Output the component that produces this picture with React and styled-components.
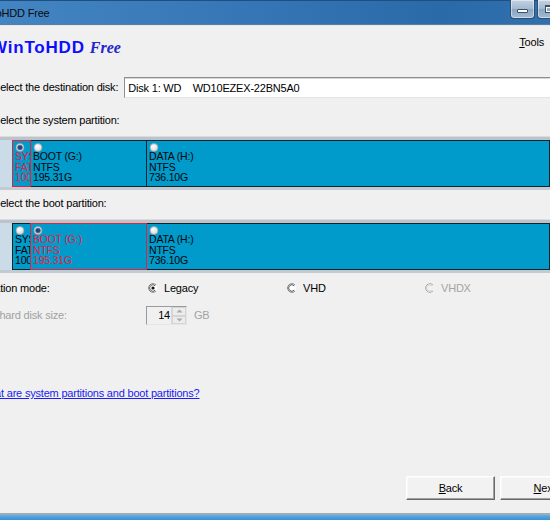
import React from "react";
import styled, { createGlobalStyle } from "styled-components";

const GlobalStyle = createGlobalStyle`
  html, body {
    margin: 0;
    padding: 0;
    background: #f0f0f0;
    overflow: hidden;
  }
  body {
    font-family: "Liberation Sans", Arial, sans-serif;
  }
`;

const Window = styled.div`
  width: 550px;
  height: 520px;
  overflow: hidden;
  display: flex;
  flex-direction: column;
  background: #f0f0f0;
  font-size: 11px;
  letter-spacing: -0.2px;
  color: #000;
`;

const TitleBar = styled.div`
  flex: none;
  height: 25px;
  box-sizing: border-box;
  display: flex;
  align-items: flex-start;
  background: linear-gradient(90deg, #4384c2 0%, #3676b6 45%, #2b6aa9 80%, #3070ae 100%);
  border-top: 1px solid #1f4f80;
  border-bottom: 1px solid #5f7d99;
  box-shadow: 0 1px 0 #dfe7ef;
`;

const TitleText = styled.span`
  flex: 1 1 0;
  min-width: 0;
  margin-left: -28px;
  margin-top: 6px;
  white-space: nowrap;
  color: #0a0a0a;
`;

const Captions = styled.div`
  flex: none;
  display: flex;
  gap: 2px;
  margin-right: -57px;
  margin-top: -1px;
`;

const CaptionButton = styled.div`
  flex: none;
  width: ${(p) => p.$width}px;
  height: 19px;
  box-sizing: border-box;
  border: 1px solid #2f4f70;
  border-top: none;
  border-radius: 0 0 4px 4px;
  background: ${(p) =>
    p.$danger
      ? "linear-gradient(#e7a493 0%, #d3725a 48%, #c3462a 52%, #d5694d 100%)"
      : "linear-gradient(#c3d3e3 0%, #a4bad1 48%, #8ca6c1 52%, #a3bbd3 100%)"};
  box-shadow: inset 0 0 0 1px rgba(255, 255, 255, 0.45);
  display: flex;
  align-items: center;
  justify-content: center;
`;

const MinGlyph = styled.div`
  width: 9px;
  height: 2px;
  margin-top: 4px;
  background: #fff;
  border: 1px solid #3b4f66;
  border-radius: 1px;
`;

const MaxGlyph = styled.div`
  width: 8px;
  height: 5px;
  border: 1px solid #3b4f66;
  border-top-width: 2px;
  box-shadow: inset 0 0 0 1px #fff;
`;

const Client = styled.div`
  flex: 1;
  display: flex;
  flex-direction: column;
  min-height: 0;
`;

const Header = styled.div`
  display: flex;
  justify-content: space-between;
  align-items: flex-start;
  padding-top: 13px;
  padding-right: 6px;
  height: 20px;
`;

const Logo = styled.div`
  white-space: nowrap;
  line-height: 20px;
  letter-spacing: 0;
`;

const Brand = styled.span`
  margin-left: -9px;
  font-family: "Liberation Sans", Arial, sans-serif;
  font-weight: bold;
  font-size: 17px;
  letter-spacing: 0.8px;
  color: #0d0dff;
`;

const Edition = styled.span`
  margin-left: 5px;
  font-family: "Liberation Serif", "Times New Roman", serif;
  font-weight: bold;
  font-style: italic;
  font-size: 16px;
  color: #2323cf;
`;

const MenuItem = styled.span`
  margin-top: -2px;
  line-height: 13px;
`;

const Key = styled.span`
  text-decoration: underline;
`;

const Label = styled.span`
  flex: none;
  margin-left: ${(p) => p.$shift}px;
  line-height: 13px;
  white-space: nowrap;
  color: ${(p) => (p.$muted ? "#a0a0a0" : "#000")};
`;

const DiskRow = styled.div`
  display: flex;
  align-items: center;
  gap: 6px;
  margin-top: 19px;
`;

const Combo = styled.div`
  flex: none;
  width: 500px;
  height: 21px;
  box-sizing: border-box;
  padding-left: 3px;
  background: #fff;
  border-top: 1px solid #8e8f8f;
  border-left: 1px solid #8e8f8f;
  border-bottom: 1px solid #e3e3e3;
  box-shadow: inset 0 1px 0 #d6d6d6;
  display: flex;
  align-items: center;
  white-space: pre;
`;

const SectionTitle = styled.div`
  display: flex;
  margin-top: ${(p) => p.$top}px;
`;

const DiskBar = styled.div`
  margin-top: 10px;
  height: 53px;
  box-sizing: border-box;
  display: flex;
  background: #cfdce7;
  border-top: 3px solid #bcc3ca;
  border-bottom: 3px solid #c3cbd2;
  box-shadow: 0 -1px 0 #dcdcdc;
`;

const DiskInfo = styled.div`
  flex: none;
  width: 12px;
  background: #cbdbe7;
`;

const Partition = styled.div`
  position: relative;
  z-index: ${(p) => (p.$selected ? 1 : 0)};
  flex: ${(p) => (p.$width ? `0 0 ${p.$width}px` : "1 0 auto")};
  margin-left: ${(p) => (p.$first ? 0 : -1)}px;
  box-sizing: border-box;
  overflow: hidden;
  padding: 2px 0 0 2px;
  background: #009acb;
  border: 1px solid ${(p) => (p.$selected ? "#e4223f" : "#13222b")};
  color: ${(p) => (p.$selected ? "#e4223f" : "#050505")};
  font-size: 10.5px;
  line-height: 10.5px;
  white-space: nowrap;
`;

const PartRadio = styled.svg`
  display: block;
  width: 10px;
  height: 9px;
  margin-bottom: -1px;
`;

const OptionsRow = styled.div`
  display: grid;
  grid-template-columns: 148px 139px 138px auto;
  align-items: center;
  margin-top: 9px;
  height: 13px;
`;

const RadioOption = styled.div`
  display: flex;
  align-items: center;
  gap: 6px;
  color: ${(p) => (p.$disabled ? "#a3a3a3" : "#000")};
  line-height: 13px;
`;

const RadioDot = styled.svg`
  flex: none;
  width: 10px;
  height: 10px;
  margin-top: -2px;
`;

const SizeRow = styled.div`
  display: grid;
  grid-template-columns: 146px auto auto 1fr;
  align-items: center;
  margin-top: 11px;
`;

const SpinBox = styled.div`
  width: 41px;
  height: 19px;
  box-sizing: border-box;
  display: flex;
  border-top: 1px solid #9a9a9a;
  border-left: 1px solid #9a9a9a;
  border-right: 1px solid #e6e6e6;
  border-bottom: 1px solid #e6e6e6;
  background: #f0f0f0;
`;

const SpinValue = styled.span`
  flex: 1;
  text-align: right;
  padding-right: 1px;
  line-height: 17px;
`;

const SpinArrows = styled.div`
  flex: none;
  width: 14px;
  display: flex;
  flex-direction: column;
  border-left: 1px solid #d8d8d8;
`;

const SpinArrow = styled.div`
  flex: 1;
  display: flex;
  align-items: center;
  justify-content: center;
  border: 1px solid #d4d4d4;
  background: #ececec;
`;

const Unit = styled.span`
  margin-left: 7px;
  color: #a3a3a3;
  line-height: 13px;
`;

const HelpLink = styled.a`
  display: block;
  margin-top: 62px;
  margin-left: -21px;
  line-height: 13px;
  color: #1c1cf2;
  text-decoration: underline;
  white-space: nowrap;
`;

const ButtonRow = styled.div`
  display: flex;
  gap: 5px;
  padding-left: 406px;
  margin-top: 76px;
`;

const WizardButton = styled.button`
  flex: none;
  width: 89px;
  height: 24px;
  box-sizing: border-box;
  font-family: inherit;
  font-size: 11px;
  letter-spacing: -0.2px;
  color: #000;
  background: #f2f2f2;
  border: 1px solid;
  border-color: #ffffff #696969 #696969 #ffffff;
  box-shadow: inset -1px -1px 0 #a0a0a0, inset 1px 1px 0 #f8f8f8;
  padding: 0;
`;

const BottomFrame = styled.div`
  margin-top: auto;
  height: 7px;
  flex: none;
  box-sizing: border-box;
  border-top: 2px solid #a2abb4;
  background: linear-gradient(#64b3e8 0%, #4ea2de 35%, #3b91d4 100%);
`;

const disks = [
  { selected: 0, title: "Select the system partition:", top: 16 },
  { selected: 1, title: "Select the boot partition:", top: 7 },
];

const partitions = [
  { name: "SYS", fs: "FAT32", size: "100M", width: 19 },
  { name: "BOOT (G:)", fs: "NTFS", size: "195.31G", width: 117 },
  { name: "DATA (H:)", fs: "NTFS", size: "736.10G" },
];

const SmallRadio = ({ checked }) => (
  <PartRadio viewBox="0 0 10 9">
    <defs>
      <radialGradient id="pr" cx="40%" cy="35%" r="70%">
        <stop offset="0%" stopColor="#ffffff" />
        <stop offset="100%" stopColor="#d3d7da" />
      </radialGradient>
    </defs>
    <circle cx="5" cy="4.5" r="4" fill="url(#pr)" stroke="#909ca5" strokeWidth="0.8" />
    {checked && <circle cx="5" cy="4.5" r="2.5" fill="#1d4679" stroke="#5b87b5" strokeWidth="0.7" />}
  </PartRadio>
);

const OptionRadio = ({ checked, disabled }) => (
  <RadioDot viewBox="0 0 10 10">
    <circle cx="5" cy="5" r="4.3" fill={disabled ? "#f0f0f0" : "#ffffff"} />
    <path d="M8 2 A4.3 4.3 0 1 0 8 8" fill="none" stroke={disabled ? "#a8a8a8" : "#7d7d7d"} strokeWidth="1" />
    <path d="M7.2 2.8 A3.2 3.2 0 1 0 7.2 7.2" fill="none" stroke={disabled ? "#cfcfcf" : "#3c3c3c"} strokeWidth="0.8" />
    {checked && <circle cx="5" cy="5" r="1.6" fill="#111" />}
  </RadioDot>
);

const Arrow = ({ up }) => (
  <svg width="7" height="4" viewBox="0 0 7 4">
    <path d={up ? "M0.5 3.5 L3.5 0.5 L6.5 3.5 Z" : "M0.5 0.5 L3.5 3.5 L6.5 0.5 Z"} fill="#a8a8a8" />
  </svg>
);

const App = () => {
  return (
    <>
      <GlobalStyle />
      <Window>
        <TitleBar>
          <TitleText>WinToHDD Free</TitleText>
          <Captions>
            <CaptionButton $width={25}>
              <MinGlyph />
            </CaptionButton>
            <CaptionButton $width={25}>
              <MaxGlyph />
            </CaptionButton>
            <CaptionButton $width={43} $danger />
          </Captions>
        </TitleBar>
        <Client>
          <Header>
            <Logo>
              <Brand>WinToHDD</Brand>
              <Edition>Free</Edition>
            </Logo>
            <MenuItem>
              <Key>T</Key>ools
            </MenuItem>
          </Header>

          <DiskRow>
            <Label $shift={-7}>Select the destination disk:</Label>
            <Combo>{"Disk 1: WD    WD10EZEX-22BN5A0"}</Combo>
          </DiskRow>

          {disks.map((disk, d) => (
            <React.Fragment key={d}>
              <SectionTitle $top={disk.top}>
                <Label $shift={-7}>{disk.title}</Label>
              </SectionTitle>
              <DiskBar>
                <DiskInfo />
                {partitions.map((part, i) => (
                  <Partition
                    key={i}
                    $first={i === 0}
                    $width={part.width}
                    $selected={disk.selected === i}
                  >
                    <SmallRadio checked={disk.selected === i} />
                    <div>{part.name}</div>
                    <div>{part.fs}</div>
                    <div>{part.size}</div>
                  </Partition>
                ))}
              </DiskBar>
            </React.Fragment>
          ))}

          <OptionsRow>
            <Label $shift={-33}>Installation mode:</Label>
            <RadioOption>
              <OptionRadio checked />
              Legacy
            </RadioOption>
            <RadioOption>
              <OptionRadio />
              VHD
            </RadioOption>
            <RadioOption $disabled>
              <OptionRadio disabled />
              VHDX
            </RadioOption>
          </OptionsRow>

          <SizeRow>
            <Label $shift={-33} $muted>
              Virtual hard disk size:
            </Label>
            <SpinBox>
              <SpinValue>14</SpinValue>
              <SpinArrows>
                <SpinArrow>
                  <Arrow up />
                </SpinArrow>
                <SpinArrow>
                  <Arrow />
                </SpinArrow>
              </SpinArrows>
            </SpinBox>
            <Unit>GB</Unit>
          </SizeRow>

          <HelpLink href="#">What are system partitions and boot partitions?</HelpLink>

          <ButtonRow>
            <WizardButton>
              <Key>B</Key>ack
            </WizardButton>
            <WizardButton>
              <Key>N</Key>ext
            </WizardButton>
          </ButtonRow>

          <BottomFrame />
        </Client>
      </Window>
    </>
  );
};

export default App;
